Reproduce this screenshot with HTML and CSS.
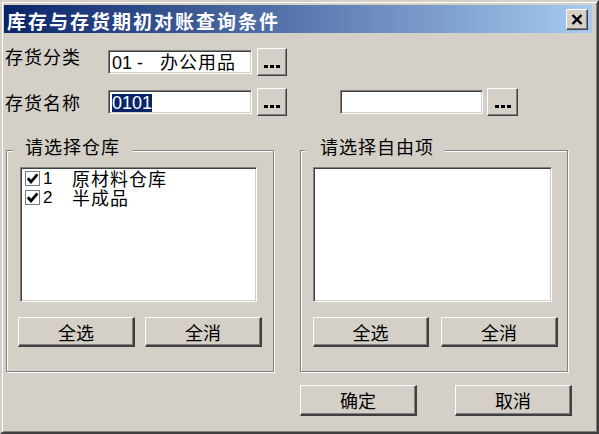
FILE: index.html
```html
<!DOCTYPE html>
<html lang="zh-CN">
<head>
<meta charset="utf-8">
<title>库存与存货期初对账查询条件</title>
<link rel="stylesheet" href="styles.css">
</head>
<body>
<div class="window">
  <div class="titlebar">
    <span class="title-text">库存与存货期初对账查询条件</span>
    <button class="close-btn" aria-label="关闭">
      <svg width="12" height="11" viewBox="0 0 12 11"><path d="M1.5 1 L10.5 10 M10.5 1 L1.5 10" stroke="#000" stroke-width="2.4" fill="none"/></svg>
    </button>
  </div>

  <div class="row row-1">
    <label class="label label-top">存货分类</label>
    <div class="field"><span class="code">01 -</span><span class="cjk-val">办公用品</span></div>
    <button class="dots-btn"><span class="dot"></span><span class="dot"></span><span class="dot"></span></button>
  </div>

  <div class="row row-2">
    <label class="label">存货名称</label>
    <div class="field"><span class="selected">0101</span></div>
    <button class="dots-btn"><span class="dot"></span><span class="dot"></span><span class="dot"></span></button>
    <div class="field field-extra"></div>
    <button class="dots-btn dots-btn-extra"><span class="dot"></span><span class="dot"></span><span class="dot"></span></button>
  </div>

  <div class="groups">
    <div class="group group-left">
      <div class="group-title">请选择仓库</div>
      <div class="listbox">
        <div class="item">
          <span class="check"><svg width="13" height="13" viewBox="0 0 13 13"><path d="M1.8 6.2 L5 9.8 L11.4 2.4" stroke="#000" stroke-width="2.8" fill="none"/></svg></span>
          <span class="num">1</span><span class="name">原材料仓库</span>
        </div>
        <div class="item">
          <span class="check"><svg width="13" height="13" viewBox="0 0 13 13"><path d="M1.8 6.2 L5 9.8 L11.4 2.4" stroke="#000" stroke-width="2.8" fill="none"/></svg></span>
          <span class="num">2</span><span class="name">半成品</span>
        </div>
      </div>
      <div class="btn-row">
        <button class="btn">全选</button>
        <button class="btn">全消</button>
      </div>
    </div>

    <div class="group group-right">
      <div class="group-title">请选择自由项</div>
      <div class="listbox"></div>
      <div class="btn-row">
        <button class="btn">全选</button>
        <button class="btn">全消</button>
      </div>
    </div>
  </div>

  <div class="footer">
    <button class="btn btn-lg">确定</button>
    <button class="btn btn-lg">取消</button>
  </div>
</div>
</body>
</html>
```

FILE: styles.css
```css
* { box-sizing: border-box; }

html, body {
  margin: 0;
  padding: 0;
  background: #d4d0c8;
}

body {
  font-family: "Noto Sans CJK SC", sans-serif;
  font-size: 18px;
  color: #000;
}

.window {
  width: 599px;
  height: 434px;
  border: 2px solid;
  border-color: #d4d0c8 #404040 #404040 #d4d0c8;
  box-shadow: inset 1px 1px #fff, inset -1px -1px #808080;
  padding: 2px 5px 2px 2px;
}

/* Title bar */
.titlebar {
  margin-top: 1px;
  height: 28px;
  background: linear-gradient(to right, #0a246a, #a6caf0);
  display: flex;
  align-items: center;
  justify-content: space-between;
  padding: 0 4px 0 3px;
}

.title-text {
  color: #fff;
  font-weight: 700;
  font-size: 19px;
  letter-spacing: 2px;
  line-height: 20px;
  margin-top: 4px;
  white-space: nowrap;
}

.close-btn {
  width: 22px;
  height: 21px;
  padding: 0 1px 0 0;
  background: #d4d0c8;
  border: 1px solid;
  border-color: #fff #404040 #404040 #fff;
  box-shadow: inset -1px -1px #808080;
  display: flex;
  align-items: center;
  justify-content: center;
}

/* Form rows */
.row {
  display: flex;
  align-items: center;
  height: 28px;
  padding-left: 1px;
}

.row-1 { margin-top: 15px; }
.row-2 { margin-top: 12px; }

.label {
  width: 103px;
  flex: none;
  letter-spacing: 1px;
  line-height: 20px;
  white-space: nowrap;
}

.label-top {
  align-self: flex-start;
  margin-top: -2px;
}

.field {
  width: 144px;
  height: 24px;
  flex: none;
  background: #fff;
  border: 1px solid;
  border-color: #808080 #fff #fff #808080;
  box-shadow: inset 1px 1px #404040, inset -1px -1px #d4d0c8;
  padding: 2px 2px 0 3px;
  font-family: "Liberation Sans", "Noto Sans CJK SC", sans-serif;
  font-size: 18px;
  line-height: 20px;
  white-space: nowrap;
  overflow: hidden;
}

.field-extra {
  width: 143px;
  margin-left: 53px;
}

.cjk-val {
  margin-left: 17px;
  letter-spacing: 1px;
}

.selected {
  display: inline-block;
  background: #0a246a;
  color: #fff;
  line-height: 18px;
  vertical-align: top;
  margin-top: 1px;
}

.dots-btn {
  width: 30px;
  height: 28px;
  flex: none;
  margin-left: 5px;
  padding: 16px 0 0 0;
  background: #d4d0c8;
  border: 1px solid;
  border-color: #fff #404040 #404040 #fff;
  box-shadow: inset -1px -1px #808080;
  display: flex;
  align-items: flex-start;
  justify-content: center;
  gap: 2px;
}

.dots-btn-extra {
  width: 31px;
  margin-left: 4px;
}

.dot {
  width: 4px;
  height: 3px;
  background: #000;
}

/* Group boxes */
.groups {
  display: flex;
  gap: 26px;
  margin-top: 34px;
  padding-left: 2px;
}

.group {
  width: 268px;
  height: 222px;
  flex: none;
  border: 1px solid #808080;
  box-shadow: inset 1px 1px #fff, 1px 1px #fff;
}

.group-title {
  width: fit-content;
  margin: -15px 0 0 6px;
  padding: 0 13px 0 12px;
  background: #d4d0c8;
  line-height: 20px;
  letter-spacing: 1px;
  white-space: nowrap;
}

.group-right .group-title {
  margin-left: 4px;
  padding: 0 11px 0 15px;
}

.listbox {
  margin: 11px 0 0 13px;
  width: 237px;
  height: 135px;
  background: #fff;
  border: 1px solid;
  border-color: #808080 #fff #fff #808080;
  box-shadow: inset 1px 1px #404040, inset -1px -1px #d4d0c8;
  padding: 1px 0 0 4px;
}

.group-right .listbox {
  margin-left: 12px;
  width: 239px;
}

.item {
  display: flex;
  align-items: center;
  height: 19px;
  line-height: 19px;
}

.check {
  width: 15px;
  height: 15px;
  flex: none;
  border: 1px solid #7a7a7a;
  background: #fff;
  display: flex;
  align-items: center;
  justify-content: center;
}

.num {
  width: 29px;
  margin-left: 3px;
  font-family: "Liberation Sans", sans-serif;
  font-size: 17px;
}

.name {
  letter-spacing: 1px;
  white-space: nowrap;
}

.btn-row {
  display: flex;
  gap: 10px;
  margin: 15px 0 0 11px;
}

.group-right .btn-row {
  gap: 12px;
  margin-left: 12px;
}

.btn {
  width: 117px;
  height: 30px;
  flex: none;
  padding: 0;
  background: #d4d0c8;
  border-style: solid;
  border-width: 1px 2px 2px 1px;
  border-color: #fff #404040 #404040 #fff;
  box-shadow: inset -1px -1px #808080;
  font-family: "Noto Sans CJK SC", sans-serif;
  font-size: 18px;
  line-height: 20px;
  color: #000;
}

.group-right .btn:first-child { width: 116px; }

/* Footer */
.footer {
  display: flex;
  justify-content: flex-end;
  gap: 38px;
  margin-top: 13px;
  padding-right: 20px;
}

.btn-lg {
  height: 31px;
}
```
